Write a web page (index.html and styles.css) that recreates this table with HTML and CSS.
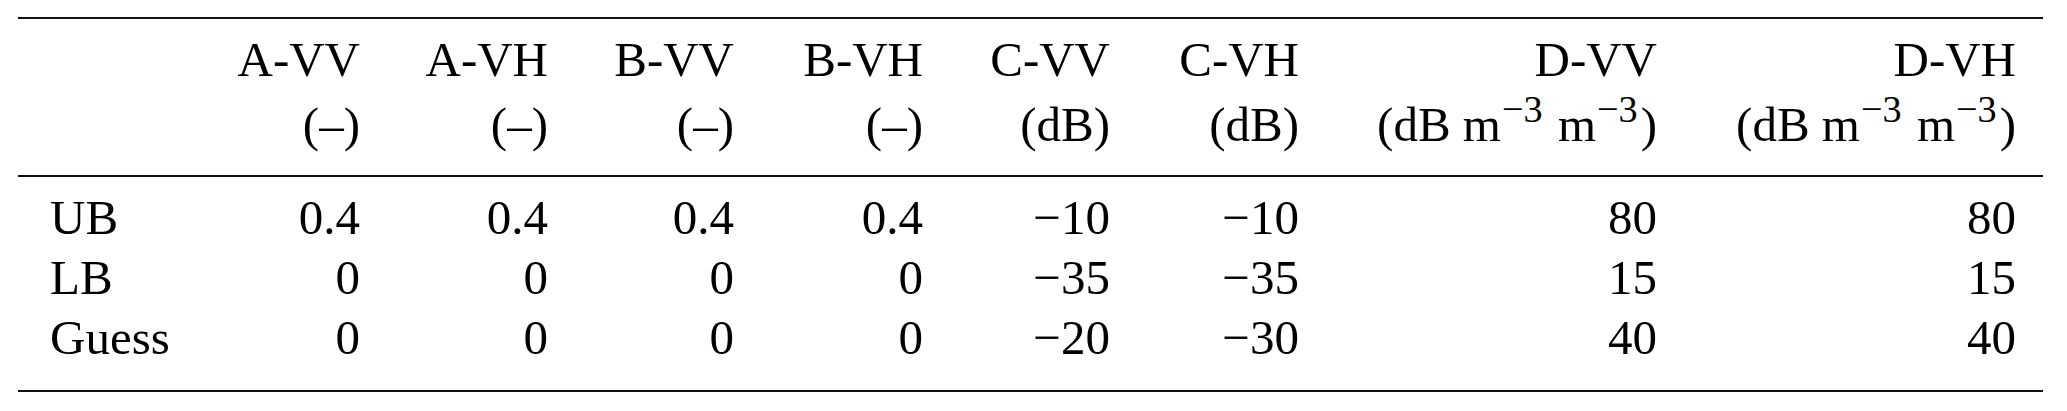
FILE: index.html
```html
<!DOCTYPE html>
<html lang="en">
<head>
    <meta charset="UTF-8">
    <meta name="viewport" content="width=device-width, initial-scale=1.0">
    <title>Parameter bounds</title>
    <link rel="stylesheet" href="styles.css">
</head>
<body>
    <table class="bounds">
        <colgroup>
            <col class="c-label">
            <col class="c-a1">
            <col class="c-a2">
            <col class="c-b1">
            <col class="c-b2">
            <col class="c-c1">
            <col class="c-c2">
            <col class="c-d1">
            <col class="c-d2">
        </colgroup>
        <thead>
            <tr>
                <th></th>
                <th>A-VV<br>(–)</th>
                <th>A-VH<br>(–)</th>
                <th>B-VV<br>(–)</th>
                <th>B-VH<br>(–)</th>
                <th>C-VV<br>(dB)</th>
                <th>C-VH<br>(dB)</th>
                <th>D-VV<br>(dB m<sup>−3</sup> m<sup>−3</sup>)</th>
                <th>D-VH<br>(dB m<sup>−3</sup> m<sup>−3</sup>)</th>
            </tr>
        </thead>
        <tbody>
            <tr>
                <td>UB</td>
                <td>0.4</td><td>0.4</td><td>0.4</td><td>0.4</td>
                <td>−10</td><td>−10</td><td>80</td><td>80</td>
            </tr>
            <tr>
                <td>LB</td>
                <td>0</td><td>0</td><td>0</td><td>0</td>
                <td>−35</td><td>−35</td><td>15</td><td>15</td>
            </tr>
            <tr>
                <td>Guess</td>
                <td>0</td><td>0</td><td>0</td><td>0</td>
                <td>−20</td><td>−30</td><td>40</td><td>40</td>
            </tr>
        </tbody>
    </table>
</body>
</html>
```
FILE: styles.css
```css
body { margin: 17px 0 0 18px; background-color: #fff; color: #000; font-family: "Liberation Serif", "Times New Roman", serif; font-size: 49px; }
.bounds { width: 2025px; table-layout: fixed; border-collapse: collapse; border-top: 2px solid #111; border-bottom: 2px solid #111; }
.c-label { width: 187px; }
.c-a1 { width: 185px; }
.c-a2 { width: 188px; }
.c-b1 { width: 186px; }
.c-b2 { width: 189px; }
.c-c1 { width: 187px; }
.c-c2 { width: 189px; }
.c-d1 { width: 358px; }
.c-d2 { width: 356px; }
th, td { padding: 0 30px 0 0; text-align: right; font-weight: normal; white-space: nowrap; }
th:first-child, td:first-child { padding-left: 32px; text-align: left; }
th:last-child, td:last-child { padding-right: 27px; }
thead th { line-height: 65px; padding-top: 8px; padding-bottom: 18px; border-bottom: 2px solid #111; }
tbody td { line-height: 60px; }
tbody tr:first-child td { padding-top: 11px; }
tbody tr:last-child td { padding-bottom: 22px; }
sup { font-size: 0.78em; line-height: 0; vertical-align: 0.5em; margin: 0 3px 0 1px; }
```
